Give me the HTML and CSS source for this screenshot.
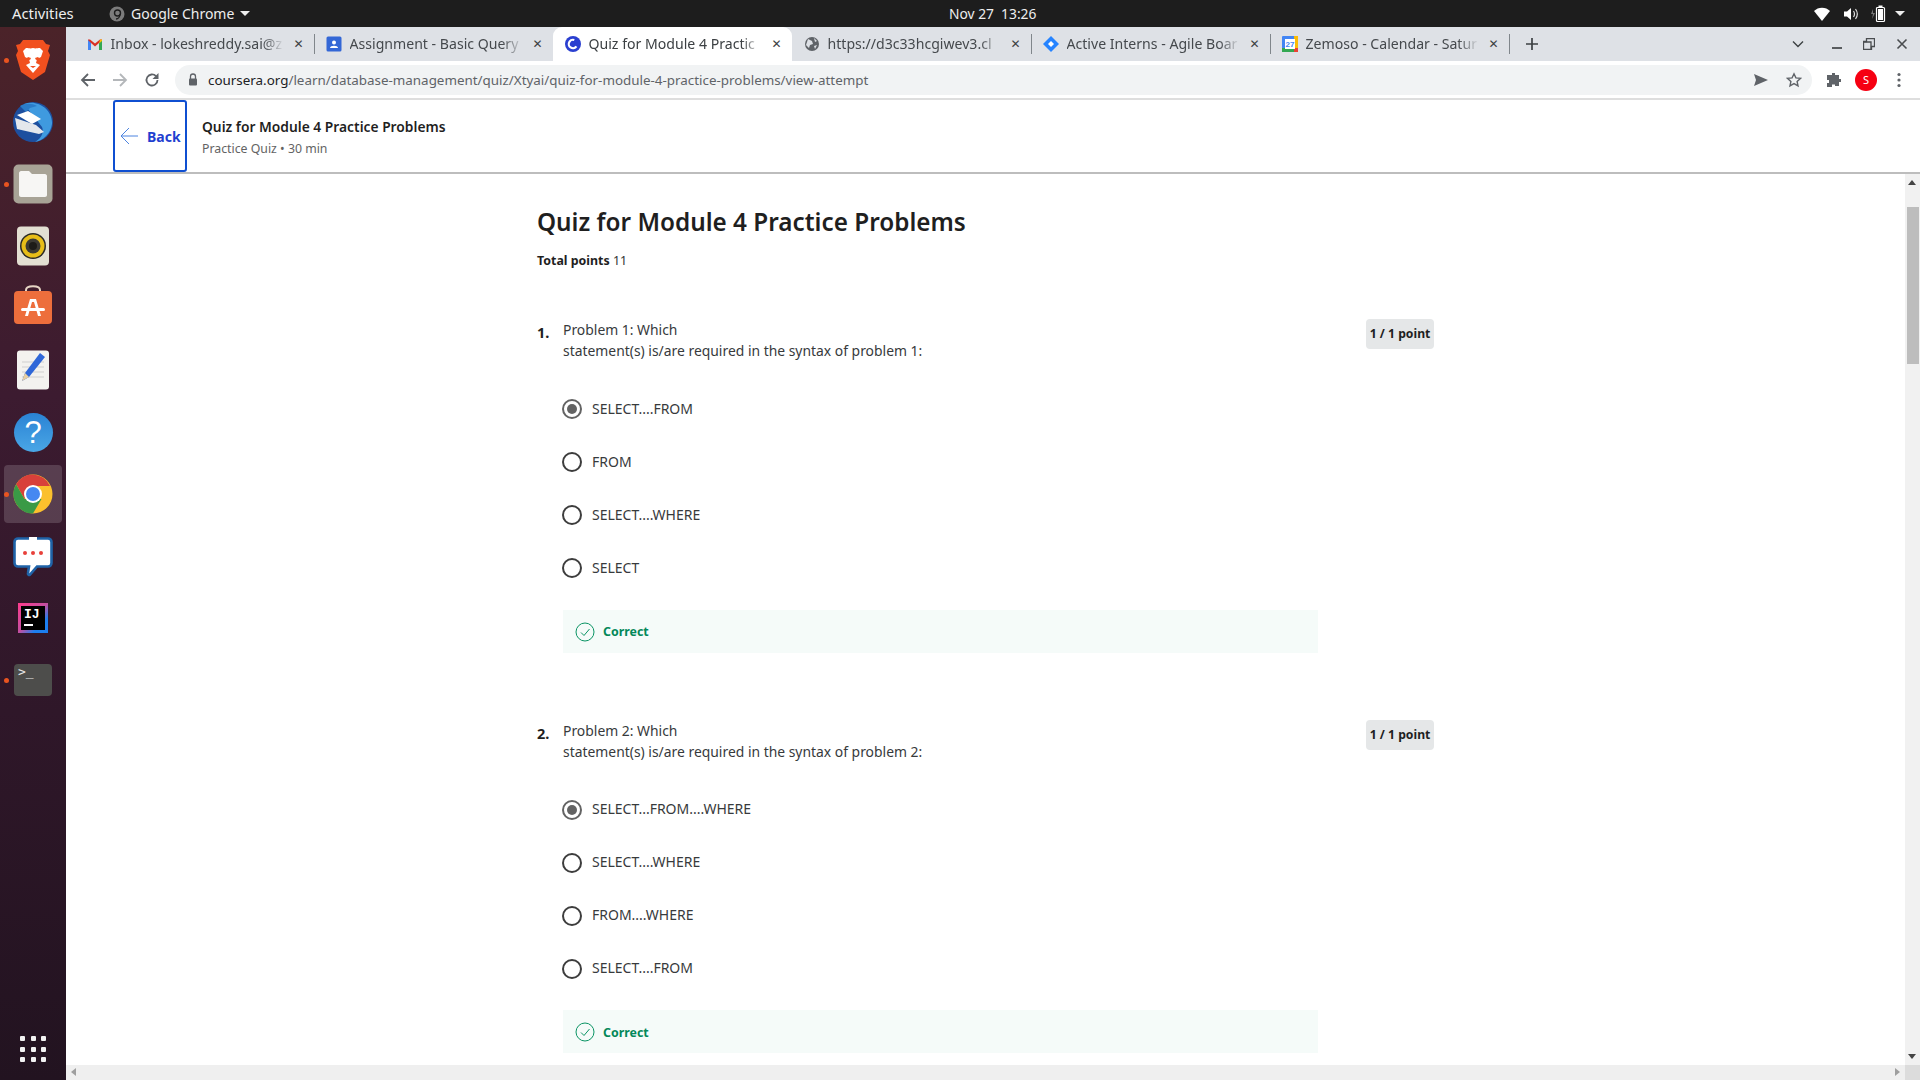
FILE: index.html
```html
<!DOCTYPE html>
<html lang="en">
<head>
<meta charset="utf-8">
<title>Quiz for Module 4 Practice Problems</title>
<link rel="stylesheet" href="styles.css">
</head>
<body>
<div class="topbar">
  <div class="top-left">
    <span class="activities">Activities</span>
    <svg class="app-icon" width="16" height="16" viewBox="0 0 16 16"><circle cx="8" cy="8" r="7.5" fill="#7c7c7c"/><circle cx="8.5" cy="7" r="3" fill="none" stroke="#1d1d1d" stroke-width="1.4"/><path d="M11 8c0 3-2 5-4 5" fill="none" stroke="#1d1d1d" stroke-width="1.4"/></svg>
    <span class="app-name">Google Chrome</span>
    <span class="caret"></span>
  </div>
  <span class="clock">Nov 27&nbsp; 13:26</span>
  <div class="top-right">
    <svg width="18" height="16" viewBox="0 0 18 16"><path d="M1 5c4-4.500 12-4.500 16 0L9 15z" fill="#fff"/></svg>
    <svg width="16" height="16" viewBox="0 0 16 16"><path d="M1 5.500h3L8 2v12l-4-3.500H1z" fill="#fff"/><path d="M10.500 5c1.200 1.800 1.200 4.200 0 6M12.500 3c2.200 3 2.200 7 0 10" fill="none" stroke="#ddd" stroke-width="1.2"/></svg>
    <svg class="batt" width="16" height="18" viewBox="0 0 16 18"><path d="M3 4 1 9h2l-1 5 3-6H3z" fill="#777"/><rect x="6.500" y="2.500" width="8" height="14" rx="1" fill="none" stroke="#fff" stroke-width="1.200"/><rect x="8.500" y="0.500" width="4" height="2" fill="#fff"/><rect x="8" y="4" width="5" height="11" fill="#fff"/></svg>
    <span class="caret caret-right"></span>
  </div>
</div>

<div class="desktop">
  <nav class="dock">
    <div class="dock-item"><span class="run-dot"></span>
      <svg width="36" height="42" viewBox="0 0 36 42"><path d="M8 1h20l3 4 4 1-2 6 2 4-5 17-12 8-12-8-5-17 2-4-2-6 4-1z" fill="#f1501f"/><path d="M18 9c3 1 4 0 7 0l3 3-2 6-4 2-1 4 4 2-7 8-7-8 4-2-1-4-4-2-2-6 3-3c3 0 4 1 7 0z" fill="#fff"/><path d="M15 21l-4-1 2-2 3 1zM21 21l4-1-2-2-3 1zM15 27h6l-3 2z" fill="#f1501f"/></svg></div>
    <div class="dock-item">
      <svg width="42" height="42" viewBox="0 0 42 42"><circle cx="21" cy="21" r="20" fill="#1d4f9f"/><path d="M12 3c14-5 29 6 28 20-1 9-9 17-17 18 7-4 9-10 7-15z" fill="#3f9adf"/><path d="M8 5c5-3 12-3 17 0l-7 2-4 4z" fill="#2a7cc9"/><path d="M3 17l21 7 8 7-5 2-22-5z" fill="#e4e7ec"/><path d="M5 14l11-4 13 8-9 5z" fill="#fff"/></svg></div>
    <div class="dock-item"><span class="run-dot"></span>
      <svg width="40" height="40" viewBox="0 0 40 40"><rect x="0.500" y="0.500" width="39" height="39" rx="5" fill="#a8a396"/><path d="M6 9c0-1 1-2 2-2h8l3 3h13c1 0 2 1 2 2v19c0 1-1 2-2 2H8c-1 0-2-1-2-2z" fill="#f7f6f4"/></svg></div>
    <div class="dock-item">
      <svg width="34" height="40" viewBox="0 0 34 40"><rect x="1" y="0.500" width="32" height="39" rx="4" fill="#e3dfd2"/><circle cx="17" cy="20" r="13" fill="#2c2a25"/><circle cx="17" cy="20" r="11.500" fill="#e7bd18"/><circle cx="17" cy="20" r="7.500" fill="#3c3a33"/><circle cx="17" cy="20" r="4" fill="#1d1c18"/></svg></div>
    <div class="dock-item">
      <svg class="up-3" width="40" height="40" viewBox="0 0 40 40"><path d="M13 9V5c0-5 14-5 14 0v4" fill="none" stroke="#e6d5c4" stroke-width="2"/><rect x="1" y="6" width="38" height="33" rx="4" fill="#ed6e3c"/><path d="M17 14h6l5 17h-3l-4-14h-2l-4 14h-3z" fill="#fff"/><rect x="8" y="23" width="24" height="3" rx="1.500" fill="#fff"/></svg></div>
    <div class="dock-item">
      <svg width="34" height="40" viewBox="0 0 34 40"><rect x="1" y="0.500" width="32" height="39" rx="3" fill="#f3f2ef"/><path d="M6 12h22M6 17h22M6 22h22M6 27h22" stroke="#cfcfcf"/><path d="M24 3l5 4-16 20-7 4 3-8z" fill="#2f67d8"/><path d="M9 23l4 4-7 4z" fill="#e8cfa0"/></svg></div>
    <div class="dock-item">
      <div class="help-icon">?</div></div>
    <div class="dock-item dock-active"><span class="run-dot"></span>
      <svg width="40" height="40" viewBox="0 0 40 40"><circle cx="20" cy="20" r="19.500" fill="#fbc02d"/><path d="M20 .5A19.500 19.500 0 0 0 3.100 10.250L11.500 25 20 12h17A19.500 19.500 0 0 0 20 .5z" fill="#d8403a"/><path d="M3.100 10.250A19.500 19.500 0 0 0 20 39.500L28.500 25H11.500z" fill="#3a9a46"/><circle cx="20" cy="20" r="9" fill="#fff"/><circle cx="20" cy="20" r="7" fill="#4688f1"/></svg></div>
    <div class="dock-item">
      <svg class="down-1" width="40" height="40" viewBox="0 0 40 40"><path d="M5 1.500h30c2 0 3.500 1.500 3.500 3.500v21c0 2-1.500 3.500-3.500 3.500H24l-7 8c-1 1-2.500 0-2-1.500l1-6.500H5c-2 0-3.500-1.500-3.500-3.500V5c0-2 1.500-3.500 3.500-3.500z" fill="#fff" stroke="#1f63a8" stroke-width="2.600"/><path d="M16 0h8v4h-8z" fill="#fff"/><circle cx="12" cy="16" r="2" fill="#e8403a"/><circle cx="20" cy="16" r="2" fill="#e8403a"/><circle cx="28" cy="16" r="2" fill="#e8403a"/></svg></div>
    <div class="dock-item">
      <div class="ij-icon"><div class="ij-inner"><span class="ij-text">IJ</span><span class="ij-bar"></span></div></div></div>
    <div class="dock-item"><span class="run-dot"></span>
      <div class="term-icon"><span>&gt;_</span></div></div>
    <div class="grid-btn"><i></i><i></i><i></i><i></i><i></i><i></i><i></i><i></i><i></i></div>
  </nav>

  <div class="window">
    <div class="tabstrip">
      <div class="tab">
        <svg class="fav" width="16" height="16" viewBox="0 0 16 16"><path d="M1 14V3.500l2 0 5 4 5-4 2 0V14h-3V7L8 10.500 4 7v7z" fill="#d93025"/><path d="M1 14V4l3 3v7z" fill="#4285f4"/><path d="M15 14V4l-3 3v7z" fill="#34a853"/><path d="M13 3.500h2V5l-3 2.500z" fill="#fbbc04"/></svg>
        <span class="tab-title">Inbox - lokeshreddy.sai@z</span><span class="tab-x">✕</span></div>
      <div class="tab tab-sep">
        <svg class="fav" width="16" height="16" viewBox="0 0 16 16"><rect x="0.500" y="0.500" width="15" height="15" rx="1.500" fill="#3367d6"/><circle cx="8" cy="6.500" r="2" fill="#fff"/><path d="M4 12c0-3 8-3 8 0z" fill="#fff"/></svg>
        <span class="tab-title">Assignment - Basic Query</span><span class="tab-x">✕</span></div>
      <div class="tab tab-active">
        <svg class="fav" width="16" height="16" viewBox="0 0 16 16"><circle cx="8" cy="8" r="8" fill="#2a3fd0"/><circle cx="8" cy="8" r="4.200" fill="none" stroke="#fff" stroke-width="2.200" stroke-dasharray="18 9" transform="rotate(35 8 8)"/></svg>
        <span class="tab-title">Quiz for Module 4 Practic</span><span class="tab-x">✕</span></div>
      <div class="tab">
        <svg class="fav" width="16" height="16" viewBox="0 0 16 16"><circle cx="8" cy="8" r="7" fill="#5f6368"/><path d="M4 3l4 2 1 3-3 1-1 3-3-3zM10 2l3 3-2 1zM10 10l3-1-2 4z" fill="#dee1e6"/></svg>
        <span class="tab-title">https://d3c33hcgiwev3.cl</span><span class="tab-x">✕</span></div>
      <div class="tab tab-sep">
        <svg class="fav" width="16" height="16" viewBox="0 0 16 16"><path d="M8 0l8 8-8 8-8-8z" fill="#2684ff"/><path d="M8 5l3 3-3 3-3-3z" fill="#fff"/></svg>
        <span class="tab-title">Active Interns - Agile Boar</span><span class="tab-x">✕</span></div>
      <div class="tab tab-sep">
        <svg class="fav" width="16" height="16" viewBox="0 0 16 16"><rect width="16" height="16" rx="1" fill="#4285f4"/><rect x="12" y="0" width="4" height="12" fill="#fbbc04"/><rect y="12" width="12" height="4" fill="#34a853"/><rect x="12" y="12" width="4" height="4" fill="#ea4335"/><rect x="3" y="3" width="10" height="10" fill="#fff"/><text x="8" y="11" class="cal-text">27</text></svg>
        <span class="tab-title">Zemoso - Calendar - Satur</span><span class="tab-x">✕</span></div>
      <div class="tab-new">
        <svg width="14" height="14" viewBox="0 0 14 14"><path d="M7 1v12M1 7h12" stroke="#3c4043" stroke-width="1.700"/></svg>
      </div>
      <div class="win-controls">
        <svg width="12" height="8" viewBox="0 0 12 8"><path d="M1 1.500l5 5 5-5" fill="none" stroke="#3c4043" stroke-width="1.400"/></svg>
        <svg class="w-min" width="12" height="12" viewBox="0 0 12 12"><path d="M1 10h10" stroke="#4a4d50" stroke-width="1.800"/></svg>
        <svg class="w-max" width="12" height="12" viewBox="0 0 12 12"><path d="M3.500.500h8v8h-3v3h-8v-8h3z" fill="#dee1e6" stroke="#4a4d50" stroke-width="1.300"/><path d="M1 4h7v7" fill="none" stroke="#4a4d50" stroke-width="1.300"/></svg>
        <svg class="w-close" width="12" height="12" viewBox="0 0 12 12"><path d="M1.500 1.500l9 9M10.500 1.500l-9 9" stroke="#4a4d50" stroke-width="1.600"/></svg>
      </div>
    </div>

    <div class="toolbar">
      <svg class="tb-back" width="16" height="16" viewBox="0 0 16 16"><path d="M15 8H2M8 2 2 8l6 6" fill="none" stroke="#5f6368" stroke-width="1.800"/></svg>
      <svg class="tb-fwd" width="16" height="16" viewBox="0 0 16 16"><path d="M1 8h13M8 2l6 6-6 6" fill="none" stroke="#b4b7ba" stroke-width="1.800"/></svg>
      <svg class="tb-reload" width="16" height="16" viewBox="0 0 16 16"><path d="M13.500 8A5.500 5.500 0 1 1 12 4.200" fill="none" stroke="#5f6368" stroke-width="1.800"/><path d="M14.500 1v6h-6z" fill="#5f6368"/></svg>
      <div class="omnibox">
        <svg width="10" height="13" viewBox="0 0 10 13"><path d="M2.500 6V3.500a2.500 2.500 0 0 1 5 0V6" fill="none" stroke="#5f6368" stroke-width="1.300"/><rect x="1" y="5.500" width="8" height="7" rx="1" fill="#5f6368"/></svg>
        <span class="url"><b class="url-host">coursera.org</b>/learn/database-management/quiz/Xtyai/quiz-for-module-4-practice-problems/view-attempt</span>
        <svg class="omni-send" width="16" height="14" viewBox="0 0 16 14"><path d="M1 1l14 6-14 6 2-6z" fill="#5f6368"/></svg>
        <svg class="omni-star" width="16" height="16" viewBox="0 0 16 16"><path d="M8 1.800l1.900 4.100 4.500.500-3.300 3 .9 4.400L8 11.600l-4 2.200.9-4.400-3.300-3 4.500-.5z" fill="none" stroke="#5f6368" stroke-width="1.400"/></svg>
      </div>
      <svg class="tb-ext" width="16" height="16" viewBox="0 0 16 16"><path d="M6 1h3v2h4v4h2v3h-2v4H9v-1.500H6V15H1v-4h2V8H1V3h5z" fill="#5f6368"/></svg>
      <span class="avatar">S</span>
      <svg class="tb-menu" width="4" height="16" viewBox="0 0 4 16"><circle cx="2" cy="2.500" r="1.600" fill="#5f6368"/><circle cx="2" cy="8" r="1.600" fill="#5f6368"/><circle cx="2" cy="13.500" r="1.600" fill="#5f6368"/></svg>
    </div>

    <header class="quiz-header">
      <a class="back-btn">
        <svg width="18" height="18" viewBox="0 0 18 18"><path d="M18 9H1M9 1 1 9l8 8" fill="none" stroke="#4d84e0" stroke-width="1"/></svg>
        <span>Back</span>
      </a>
      <div class="quiz-head-text">
        <div class="quiz-head-title">Quiz for Module 4 Practice Problems</div>
        <div class="quiz-head-sub">Practice Quiz • 30 min</div>
      </div>
    </header>

    <div class="viewport">
      <main class="content">
        <h1 class="quiz-title">Quiz for Module 4 Practice Problems</h1>
        <p class="total"><b>Total points</b> 11</p>

        <section class="question">
          <div class="q-head">
            <span class="q-num">1.</span>
            <div class="q-text">Problem 1: Which<br>statement(s) is/are required in the syntax of problem 1:</div>
            <span class="badge">1 / 1 point</span>
          </div>
          <div class="answers">
            <div class="option"><span class="radio radio-on"></span>SELECT....FROM</div>
            <div class="option"><span class="radio"></span>FROM</div>
            <div class="option"><span class="radio"></span>SELECT....WHERE</div>
            <div class="option"><span class="radio"></span>SELECT</div>
            <div class="correct">
              <svg width="20" height="20" viewBox="0 0 20 20"><circle cx="10" cy="10" r="9" fill="none" stroke="#0a9464" stroke-width="1"/><path d="M6 10.500l3 3 5.500-6.500" fill="none" stroke="#0a9464" stroke-width="1"/></svg>
              <span>Correct</span>
            </div>
          </div>
        </section>

        <section class="question">
          <div class="q-head">
            <span class="q-num">2.</span>
            <div class="q-text">Problem 2: Which<br>statement(s) is/are required in the syntax of problem 2:</div>
            <span class="badge">1 / 1 point</span>
          </div>
          <div class="answers">
            <div class="option"><span class="radio radio-on"></span>SELECT...FROM....WHERE</div>
            <div class="option"><span class="radio"></span>SELECT....WHERE</div>
            <div class="option"><span class="radio"></span>FROM....WHERE</div>
            <div class="option"><span class="radio"></span>SELECT....FROM</div>
            <div class="correct">
              <svg width="20" height="20" viewBox="0 0 20 20"><circle cx="10" cy="10" r="9" fill="none" stroke="#0a9464" stroke-width="1"/><path d="M6 10.500l3 3 5.500-6.500" fill="none" stroke="#0a9464" stroke-width="1"/></svg>
              <span>Correct</span>
            </div>
          </div>
        </section>
      </main>
      <div class="vscroll">
        <span class="arrow-up"></span>
        <span class="vthumb"></span>
        <span class="arrow-down"></span>
      </div>
    </div>
    <div class="hscroll">
      <span class="arrow-left"></span>
      <span class="arrow-right"></span>
      <span class="corner"></span>
    </div>
  </div>
</div>
</body>
</html>
```
FILE: styles.css
```css
* { box-sizing: border-box; }
html, body { margin: 0; height: 100%; overflow: hidden; }
body { width: 1920px; height: 1080px; display: flex; flex-direction: column; font-family: "Noto Sans", "Open Sans", sans-serif; background: #fff; }

/* GNOME top bar */
.topbar { height: 27px; flex: none; background: #1d1d1d; color: #eee; display: flex; align-items: center; font-size: 14px; }
.top-left { flex: 0 0 949px; display: flex; align-items: center; padding-left: 12px; }
.activities { width: 97px; font-size: 14.800px; line-height: 18px; padding-bottom: 1px; }
.app-name { margin-left: 6px; }
.caret { width: 0; height: 0; border-left: 5px solid transparent; border-right: 5px solid transparent; border-top: 5px solid #eee; margin-left: 6px; }
.clock { font-size: 13.800px; }
.top-right { margin-left: auto; display: flex; align-items: center; gap: 12px; padding-right: 15px; }
.batt { margin-left: -1px; }
.caret-right { margin-left: -3px; }

.desktop { flex: 1; display: flex; min-height: 0; }

/* Dock */
.dock { width: 66px; flex: none; display: flex; flex-direction: column; align-items: center; padding-top: 2px; background: linear-gradient(180deg, #4b2329 0%, #3c1b30 35%, #2f1729 65%, #221320 100%); }
.dock-item { position: relative; width: 66px; height: 62px; flex: none; display: flex; align-items: center; justify-content: center; }
.dock-active::before { content: ""; position: absolute; left: 4px; right: 4px; top: 2px; bottom: 2px; border-radius: 4px; background: rgba(255,255,255,.16); }
.dock-item > svg, .dock-item > div { position: relative; }
.up-3 { margin-bottom: 6px; }
.down-1 { margin-top: 2px; }
.run-dot { position: absolute; left: 4px; top: 29px; width: 5px; height: 5px; border-radius: 50%; background: #e95420; }
.help-icon { width: 39px; height: 39px; border-radius: 50%; background: linear-gradient(180deg, #2a83d4, #4aa6e6); color: #fff; font: 400 31px/39px "Liberation Sans", sans-serif; text-align: center; }
.ij-icon { width: 30px; height: 30px; padding: 3px; background: linear-gradient(135deg, #ff3b8d 0%, #c34fa0 50%, #1c7ff0 75%, #1c7ff0 100%); }
.ij-inner { width: 24px; height: 24px; background: #000; display: flex; flex-direction: column; padding: 2px 3px; }
.ij-text { color: #fff; font: 700 13px/13px "Liberation Mono", monospace; }
.ij-bar { width: 9px; height: 2px; background: #fff; margin-top: 3px; }
.term-icon { width: 38px; height: 32px; border-radius: 4px; background: #4d4d4b; color: #e8e8e8; font: 400 13px/14px "DejaVu Sans Mono", monospace; padding: 1px 4px; }
.grid-btn { margin-top: auto; margin-bottom: 18px; display: grid; grid-template-columns: repeat(3, 5px); gap: 5.500px; }
.grid-btn i { width: 5px; height: 5px; border-radius: 1px; background: #f2f2f2; }

.window { flex: 1; min-width: 0; display: flex; flex-direction: column; }

/* Tab strip */
.tabstrip { height: 34px; flex: none; background: #dee1e6; display: flex; align-items: stretch; padding-left: 8.500px; }
.tab { position: relative; width: 239px; flex: none; display: flex; align-items: center; padding: 0 8px 0 12px; color: #45494d; font-size: 14.100px; }
.tab-sep::before { content: ""; position: absolute; left: 0; top: 7px; bottom: 7px; width: 1px; background: #80868b; }
.tab-active { background: #fff; color: #3c4043; border-radius: 9px 9px 0 0; }
.fav { flex: none; }
.tab-title { margin-left: 8px; flex: 1; min-width: 0; line-height: 18px; padding-bottom: 1px; white-space: nowrap; overflow: hidden; -webkit-mask-image: linear-gradient(90deg, #000 88%, transparent 100%); mask-image: linear-gradient(90deg, #000 88%, transparent 100%); }
.tab-x { flex: none; width: 14px; margin-left: 8px; font-size: 12px; text-align: center; color: #3c4043; font-family: "DejaVu Sans", sans-serif; }
.cal-text { font: 700 8px "Liberation Sans", sans-serif; fill: #4285f4; text-anchor: middle; }
.tab-new { width: 46px; flex: none; display: flex; align-items: center; justify-content: center; position: relative; }
.tab-new::before { content: ""; position: absolute; left: 0; top: 7px; bottom: 7px; width: 1px; background: #80868b; }
.win-controls { margin-left: auto; display: flex; align-items: center; padding-right: 12px; }
.w-min { margin-left: 27px; }
.w-max { margin-left: 20px; }
.w-close { margin-left: 21px; }

/* Toolbar */
.toolbar { height: 39px; flex: none; background: #fff; border-bottom: 2px solid #dedede; display: flex; align-items: center; padding: 0 0 0 14px; }
.tb-fwd { margin-left: 16px; }
.tb-reload { margin-left: 16px; }
.omnibox { width: 1637px; height: 30px; margin-left: 15px; border-radius: 15px; background: #f1f3f4; display: flex; align-items: center; padding: 0 10px 0 13px; }
.url { margin-left: 10px; font-size: 13.400px; color: #5f6368; white-space: nowrap; }
.url-host { font-weight: 400; color: #202124; }
.omni-send { margin-left: auto; }
.omni-star { margin-left: 17px; }
.tb-ext { margin-left: 14px; }
.avatar { width: 22px; height: 22px; margin-left: 13px; border-radius: 50%; background: #f60012; color: #fff; font-size: 11px; line-height: 22px; text-align: center; }
.tb-menu { margin-left: 20px; }

/* Coursera header */
.quiz-header { height: 74px; flex: none; background: #fff; border-bottom: 2px solid #bdbdbd; display: flex; align-items: stretch; padding-left: 47px; }
.back-btn { width: 74px; border: 2px solid #0f4fd1; border-radius: 3px; display: flex; align-items: center; gap: 9px; padding-left: 5px; color: #1f3fd0; font-size: 14px; font-weight: 700; }
.quiz-head-text { margin-left: 15px; padding-top: 17px; }
.quiz-head-title { font-size: 13.800px; line-height: 20px; font-weight: 600; color: #1f1f1f; }
.quiz-head-sub { font-size: 12.300px; line-height: 20px; margin-top: 2px; color: #636363; }

/* Scrolling area */
.viewport { flex: 1; min-height: 0; display: flex; }
.content { flex: 1; min-width: 0; overflow: hidden; padding: 30px 0 0 471px; color: #1f1f1f; }
.quiz-title { margin: 0; font-size: 24.300px; line-height: 36px; font-weight: 600; }
.total { margin: 11px 0 0; font-size: 12.400px; line-height: 20px; color: #333; }
.total b { color: #1f1f1f; font-weight: 700; }
.question { width: 897px; margin-top: 48px; }
.question + .question { margin-top: 67px; }
.q-head { display: flex; align-items: flex-start; }
.q-num { width: 26px; flex: none; font-size: 14.500px; font-weight: 700; line-height: 21px; padding-top: 3px; }
.q-text { font-size: 13.900px; line-height: 21px; color: #373a3c; }
.badge { margin-left: auto; width: 68px; height: 30px; border-radius: 4px; background: #e5e7e8; font-size: 12.200px; font-weight: 700; line-height: 30px; text-align: center; color: #1f1f1f; white-space: nowrap; }
.answers { margin: 0 0 0 26px; width: 755px; padding-top: 21.500px; }
.option { height: 53px; display: flex; align-items: center; font-size: 14px; line-height: 20px; padding-bottom: 1px; color: #373a3c; }
.radio { width: 20px; height: 20px; margin: 1px 10px 0 -1px; border-radius: 50%; border: 2px solid #3d3d3d; flex: none; display: flex; align-items: center; justify-content: center; }
.radio-on { border-color: #636363; }
.radio-on::after { content: ""; width: 10px; height: 10px; border-radius: 50%; background: #636363; }
.correct { height: 43px; margin-top: 15px; background: #f5fbf9; display: flex; align-items: center; gap: 8px; padding-left: 12px; padding-top: 1px; font-size: 12.400px; font-weight: 700; color: #04885a; }

.vscroll { width: 15px; flex: none; background: #f1f1f1; position: relative; }
.arrow-up { position: absolute; left: 3px; top: 6px; border-left: 4.500px solid transparent; border-right: 4.500px solid transparent; border-bottom: 5px solid #444; }
.arrow-down { position: absolute; left: 3px; bottom: 6px; border-left: 4.500px solid transparent; border-right: 4.500px solid transparent; border-top: 5px solid #444; }
.vthumb { position: absolute; left: 2px; right: 1px; top: 33px; height: 157px; background: #bdbdbd; }
.hscroll { height: 15px; flex: none; background: #efefef; position: relative; }
.arrow-left { position: absolute; left: 5px; top: 3px; border-top: 4.500px solid transparent; border-bottom: 4.500px solid transparent; border-right: 5px solid #9e9e9e; }
.arrow-right { position: absolute; right: 20px; top: 3px; border-top: 4.500px solid transparent; border-bottom: 4.500px solid transparent; border-left: 5px solid #9e9e9e; }
.corner { position: absolute; right: 0; top: 0; width: 15px; height: 15px; background: #dcdcdc; }
```
